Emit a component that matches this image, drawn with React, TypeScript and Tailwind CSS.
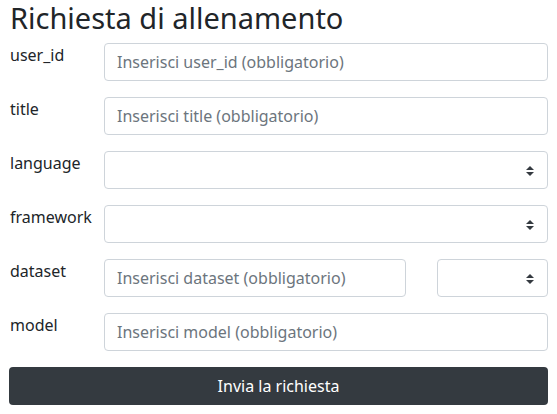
const SelectArrows = () => (
  <svg width="8" height="10" viewBox="0 0 4 5" className="absolute right-[13px] top-[14px]">
    <path fill="#343a40" d="M2 0L0 2h4zm0 5L0 3h4z" />
  </svg>
);

const Field = ({ label, placeholder, select }: { label: string; placeholder?: string; select?: boolean }) => (
  <div className="flex mb-4">
    <label className="w-[95px] shrink-0 leading-6 pl-px">{label}</label>
    {select ? (
      <div className="relative flex-1 h-[38px] border border-[#ced4da] rounded bg-white">
        <SelectArrows />
      </div>
    ) : (
      <input
        className="flex-1 h-[38px] border border-[#ced4da] rounded px-3 placeholder:text-[#6c757d] outline-none"
        placeholder={placeholder}
      />
    )}
  </div>
);

export default function App() {
  return (
    <div className="px-[9px] text-[#212529] text-base bg-white" style={{ fontFamily: '"Noto Sans", sans-serif' }}>
      <h1 className="text-[29px] leading-[36px] font-normal mb-[7px] pl-px">Richiesta di allenamento</h1>
      <Field label="user_id" placeholder="Inserisci user_id (obbligatorio)" />
      <Field label="title" placeholder="Inserisci title (obbligatorio)" />
      <Field label="language" select />
      <Field label="framework" select />
      <div className="flex mb-4">
        <label className="w-[95px] shrink-0 leading-6 pl-px">dataset</label>
        <input
          className="w-[302px] h-[38px] border border-[#ced4da] rounded px-3 placeholder:text-[#6c757d] outline-none"
          placeholder="Inserisci dataset (obbligatorio)"
        />
        <div className="relative ml-[31px] flex-1 h-[38px] border border-[#ced4da] rounded bg-white">
          <SelectArrows />
        </div>
      </div>
      <Field label="model" placeholder="Inserisci model (obbligatorio)" />
      <button className="w-full h-[38px] rounded bg-[#343a40] text-white">Invia la richiesta</button>
    </div>
  );
}
